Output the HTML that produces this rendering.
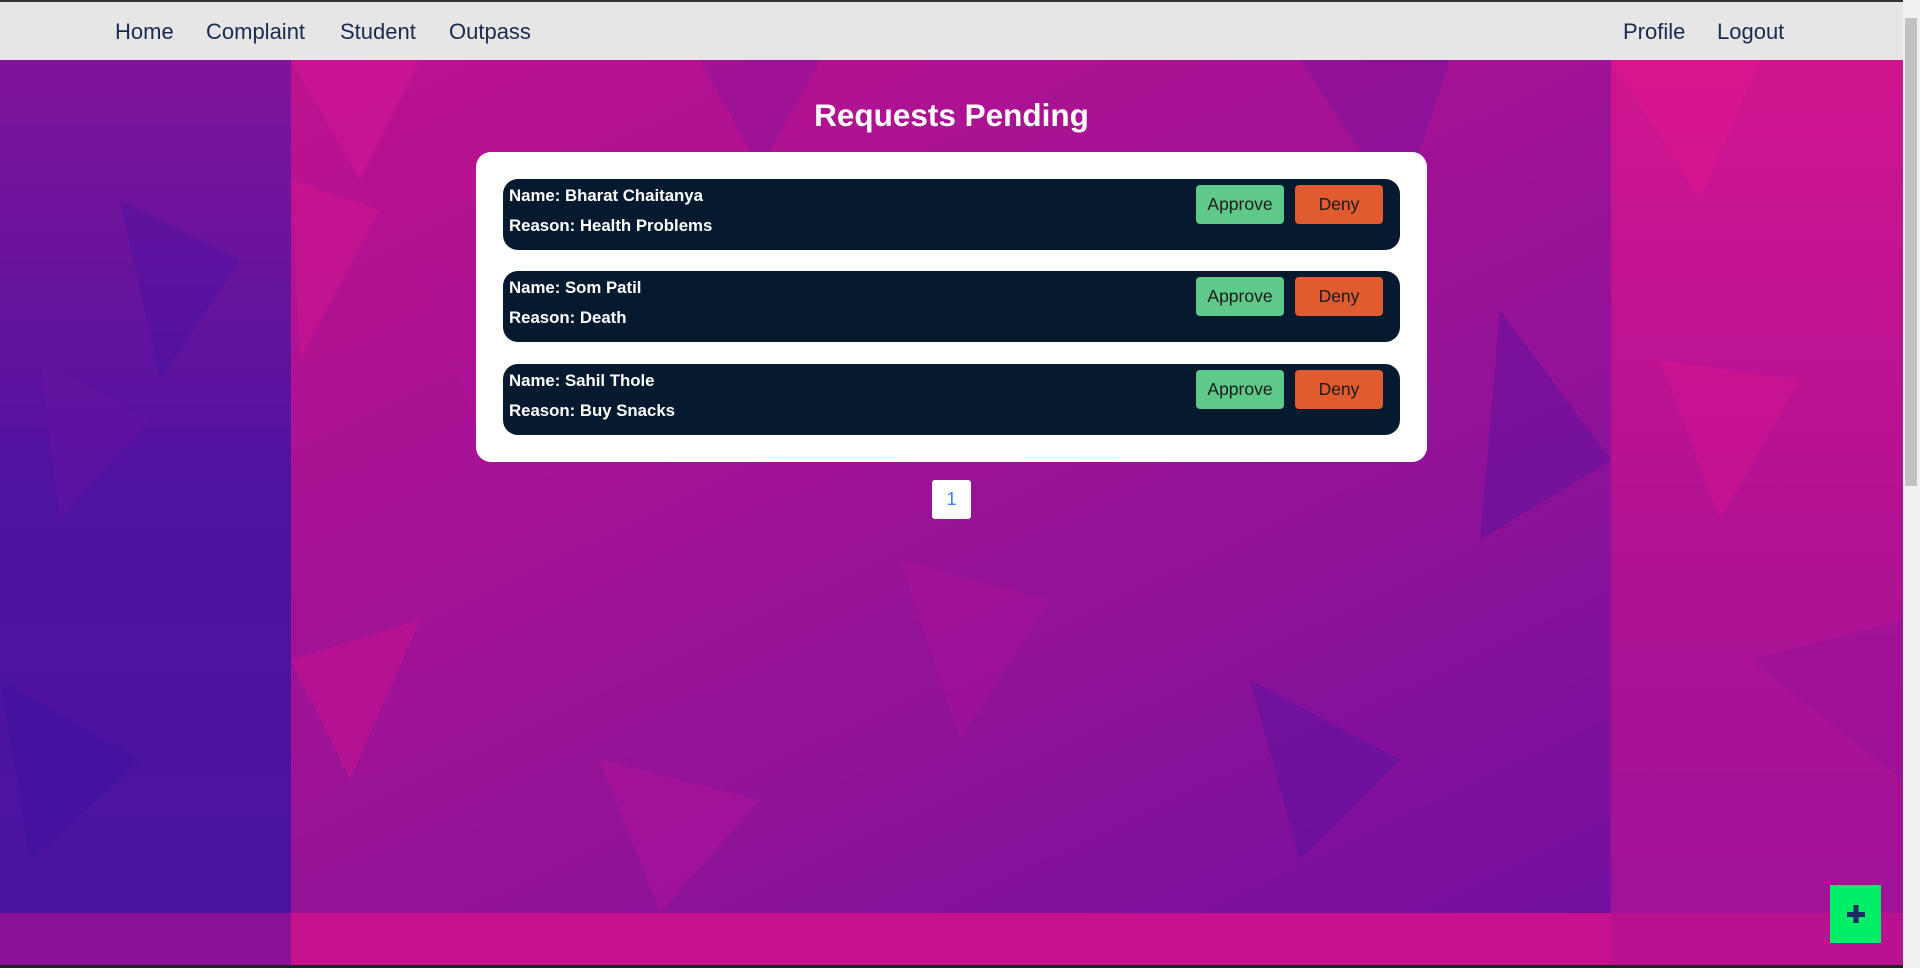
<!DOCTYPE html>
<html><head><meta charset="utf-8"><style>
*{margin:0;padding:0;box-sizing:border-box}
body{width:1920px;height:968px;overflow:hidden;font-family:"Liberation Sans",sans-serif;background:#8a1495;position:relative}
.nav{position:absolute;left:0;top:0;width:1903px;height:60px;background:#e6e6e6;border-top:2px solid #333}
.nav a{position:absolute;top:17px;font-size:22px;color:#1a2b50;text-decoration:none}
.bg{position:absolute;left:0;top:60px}
.title{position:absolute;left:0;width:1903px;top:97px;text-align:center;color:#fff;font-weight:bold;font-size:31.5px}
.card{position:absolute;left:476px;top:152px;width:951px;height:310px;background:#fff;border-radius:15px}
.row{position:absolute;left:27px;width:897px;height:71px;background:#051a2e;border-radius:15px}
.row .t{position:absolute;left:6px;color:#fff;font-weight:bold;font-size:16.8px}
.btn{position:absolute;top:6px;height:39px;width:88px;border-radius:4px;font-size:17.5px;color:#1a1a1a;text-align:center;line-height:39px}
.ap{left:693px;background:#5fc98a}.dn{left:792px;background:#e05c30}
.page{position:absolute;left:932px;top:480px;width:39px;height:39px;background:#fff;border-radius:3px;color:#3b82f6;text-align:center;line-height:39px;font-size:18px}
.plus{position:absolute;left:1830px;top:885px;width:51px;height:58px;background:#00ee66}
.sb{position:absolute;left:1903px;top:0;width:17px;height:968px;background:#f1f1f1}
.thumb{position:absolute;left:1905px;top:18px;width:12px;height:468px;background:#c1c1c1}
</style></head><body>
<svg class="bg" width="1903" height="908" viewBox="0 0 1903 908">
<defs><linearGradient id="g" x1="0" y1="0" x2="1" y2="1"><stop offset="0" stop-color="#c4128f"/><stop offset=".5" stop-color="#9a1296"/><stop offset="1" stop-color="#6a10a0"/></linearGradient>
<linearGradient id="s" x1="0" y1="0" x2="0" y2="1"><stop offset="0" stop-color="#80149a"/><stop offset=".5" stop-color="#5012a0"/><stop offset="1" stop-color="#4a14a0"/></linearGradient>
<linearGradient id="r" x1="0" y1="0" x2="0" y2="1"><stop offset="0" stop-color="#d0148f"/><stop offset=".6" stop-color="#b01294"/><stop offset="1" stop-color="#a01298"/></linearGradient></defs>
<rect width="1903" height="908" fill="url(#g)"/>
<rect x="0" width="291" height="853" fill="url(#s)"/>
<rect x="1611" width="292" height="853" fill="url(#r)"/>
<g opacity=".35">
<polygon points="291,0 420,0 360,120" fill="#e0169a"/>
<polygon points="291,120 380,150 300,300" fill="#e0168f"/>
<polygon points="420,200 560,260 480,380" fill="#b0149a"/>
<polygon points="700,0 820,0 760,110" fill="#7a1298"/>
<polygon points="1300,0 1450,0 1400,150" fill="#6a10a0"/>
<polygon points="1500,250 1611,400 1480,480" fill="#4a10a0"/>
<polygon points="291,600 420,560 350,720" fill="#e0148f"/>
<polygon points="900,500 1050,540 960,680" fill="#b01298"/>
<polygon points="1250,620 1400,700 1300,800" fill="#4a12a0"/>
<polygon points="1611,0 1760,0 1700,140" fill="#e8158f"/>
<polygon points="1660,300 1800,320 1720,460" fill="#e01490"/>
<polygon points="1750,600 1903,560 1903,720" fill="#8a1298"/>
<polygon points="0,620 140,700 30,800" fill="#3a10a0"/>
<polygon points="120,140 240,200 160,320" fill="#4010a0"/>
<polygon points="40,300 150,360 60,460" fill="#6a12a0"/>
<polygon points="600,700 760,740 660,853" fill="#c0149a"/>
</g>
<rect x="0" y="853" width="1903" height="55" fill="#b81290"/>
<rect x="291" y="853" width="1320" height="55" fill="#d0128f" opacity=".6"/>
<rect x="0" y="853" width="291" height="55" fill="#6a12a0" opacity=".6"/>
<rect x="0" y="905" width="1903" height="3" fill="#222"/>
</svg>
<div class="nav">
<a style="left:115px">Home</a><a style="left:206px">Complaint</a><a style="left:340px">Student</a><a style="left:449px">Outpass</a>
<a style="left:1623px">Profile</a><a style="left:1717px">Logout</a>
</div>
<div class="title">Requests Pending</div>
<div class="card">
<div class="row" style="top:27px"><div class="t" style="top:7px">Name: Bharat Chaitanya</div><div class="t" style="top:37px">Reason: Health Problems</div><div class="btn ap">Approve</div><div class="btn dn">Deny</div></div>
<div class="row" style="top:119px"><div class="t" style="top:7px">Name: Som Patil</div><div class="t" style="top:37px">Reason: Death</div><div class="btn ap">Approve</div><div class="btn dn">Deny</div></div>
<div class="row" style="top:212px"><div class="t" style="top:7px">Name: Sahil Thole</div><div class="t" style="top:37px">Reason: Buy Snacks</div><div class="btn ap">Approve</div><div class="btn dn">Deny</div></div>
</div>
<div class="page">1</div>
<div class="plus"><svg width="51" height="58"><rect x="17" y="27" width="18" height="5" fill="#1a2b60"/><rect x="23.5" y="20" width="5" height="18" fill="#1a2b60"/></svg></div>
<div class="sb"></div><div class="thumb"></div>
</body></html>
